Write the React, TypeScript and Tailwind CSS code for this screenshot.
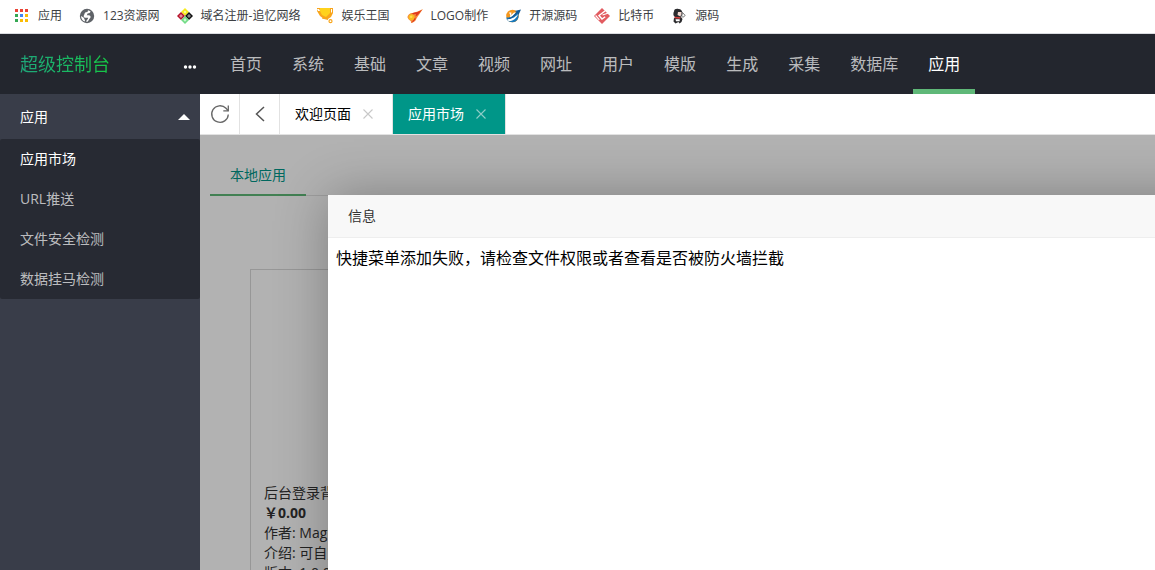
import { useState } from 'react'
import type { ReactNode } from 'react'

const AppsIcon = () => (
  <svg viewBox="0 0 16 16" className="size-4">
    <path fill="#ea4335" d="M1 1h3v3H1zM6 1h3v3H6zM11 1h3v3h-3z" />
    <path fill="#34a853" d="M1 6h3v3H1zM1 11h3v3H1z" />
    <path fill="#4285f4" d="M6 6h3v3H6z" />
    <path fill="#fbbc05" d="M11 6h3v3h-3zM6 11h3v3H6zM11 11h3v3h-3z" />
  </svg>
)

const GlobeIcon = () => (
  <svg viewBox="0 0 16 16" className="size-4">
    <circle cx="8" cy="8" r="7.200" fill="#5f6368" />
    <path fill="#fff" d="M9 2.200l2.500 1C11.500 5 10 5.200 8.500 5.500 8 6 8.500 7 7.500 7.300H10c1.800.2 2 2 1 3-1.300.8-1 2.500-2.500 3.400l-1.300.1c0-1.500 1.800-2.300 2-4H6C4.500 9.500 4.300 7.500 5.300 6.500 5.500 4.500 7 3.800 8.500 4z" />
    <path fill="#fff" d="M2 8l2.500 1.500c1 .8.500 1.800 1.500 2.500l-.2 1.600C3.500 12.800 2 10.500 2 8z" />
  </svg>
)

const DomainIcon = () => (
  <svg viewBox="0 0 16 16" className="size-4">
    <path fill="#f8ec1e" d="M8 0l4 4-4 4-4-4z" />
    <path fill="#b5122b" d="M4 4l4 4-4 4-4-4z" />
    <path fill="#111" d="M12 4l4 4-4 4-4-4z" />
    <path fill="#72dc86" d="M8 8l4 4-4 4-4-4z" />
    <circle cx="4" cy="8" r="1.200" fill="#d8707c" stroke="#f0b8c0" strokeWidth=".7" />
    <circle cx="12" cy="8" r="1.200" fill="#555" stroke="#bbb" strokeWidth=".7" />
    <circle cx="8" cy="12" r="1.400" fill="#c9f5d0" />
    <circle cx="8" cy="4" r="1.200" fill="#fff69a" />
  </svg>
)

const TrophyIcon = () => (
  <svg viewBox="0 0 16 16" className="size-4">
    <path fill="#f8a51b" d="M0 0h16v5l-2 4-3 2H7L3 8 0 3z" />
    <path fill="#ffd21c" d="M3 0h10v5L9 9 5 7 3 3z" />
    <path fill="#fff" d="M0 1h2l1 2H1zM14 1h1v3l-1 1z" />
    <path d="M5 10l6 1.500" stroke="#f8a51b" strokeWidth="1" />
    <circle cx="13.500" cy="13.200" r="1.500" fill="#fff" stroke="#f8a51b" strokeWidth="1.200" />
  </svg>
)

const CometIcon = () => (
  <svg viewBox="0 0 16 16" className="size-4">
    <path fill="#f58a3c" d="M16 1C13 5 11.500 7.500 9.500 10.500 9 13 6.500 14.500 4 15 4.500 12 2 13 .5 9.500.5 7 3 5 5.500 5 9 4 12.500 3 16 1z" />
    <path fill="#e0391f" d="M15 2C12 5 11 7.500 8.500 8.500L9 6 6 6.500 5 5.200C9 4.500 12 3.500 15 2zM8.800 9.500C8.500 12 7 14 4 15c1.500-1.500 2.500-3 2.800-4.500z" />
    <circle cx="4.500" cy="9.200" r="3" fill="#f9b91e" />
    <circle cx="4.200" cy="8.800" r="1.300" fill="#ffdc4a" />
  </svg>
)

const PlanetIcon = () => (
  <svg viewBox="0 0 16 16" className="size-4">
    <circle cx="7.500" cy="8" r="6.300" fill="#f5971d" />
    <path fill="#1878bc" d="M1.300 9.500C5 10 9 8 12.500 4c2.500 4 .5 10-5 10.300C4 14.400 1.700 12.500 1.300 9.500z" />
    <path fill="#fff" d="M4 4.500h2.500L6 7l3-2.500h2L7.500 8.500 5 9.500 5.300 7z" />
    <path fill="#fff" d="M2 11c5 .5 9-2.500 11-5-1 4-5 7.500-9.500 7z" />
    <path fill="#155b96" d="M9.500 3L16 1.500 13.500 7 12.500 5C9 9.500 5 11.500 1 11.500 5 10.500 8.500 7.500 11.500 3.800z" />
  </svg>
)

const CoinIcon = () => (
  <svg viewBox="0 0 16 16" className="size-4">
    <path fill="#e25b60" d="M8 0l8 8-8 8-8-8z" />
    <path d="M11 3L5 7.500l3 3.500 3.200-2.300" fill="none" stroke="#fff" strokeWidth="1.400" />
    <path d="M1.600 7.500l3.800 4.300M8.500 7l6-2" stroke="#fff" strokeWidth="1.200" />
  </svg>
)

const MascotIcon = () => (
  <svg viewBox="0 0 16 16" className="size-4">
    <path fill="#2b2b2e" d="M3 3.500C3 1 5.500.5 7.500 1 10 .5 11.500 3 11.500 5.500c0 2-1 3.500-3 3.500H4C2 8 2 5 3 3.500z" />
    <path fill="#f1d8d0" d="M7 4h3.500v3L9 8.300 6.500 7z" />
    <path fill="#2b2b2e" d="M3 10l7-1 1.500 2-1 3-2 1.500-1-1.500-3 1.500-2-2z" />
    <path fill="#d63a3a" d="M3.500 8.700l6 .5-.5 1.500-5.500-.4z" />
    <path fill="#fff" d="M4.500 11.200h4.200v2H5z" />
    <path fill="#fff" stroke="#555" strokeWidth=".8" d="M11.500 4.500l2.700 3-2.200 1.800-1.300-1z" />
  </svg>
)

const bookmarks: { label: string; icon: ReactNode }[] = [
  { label: '应用', icon: <AppsIcon /> },
  { label: '123资源网', icon: <GlobeIcon /> },
  { label: '域名注册-追忆网络', icon: <DomainIcon /> },
  { label: '娱乐王国', icon: <TrophyIcon /> },
  { label: 'LOGO制作', icon: <CometIcon /> },
  { label: '开源源码', icon: <PlanetIcon /> },
  { label: '比特币', icon: <CoinIcon /> },
  { label: '源码', icon: <MascotIcon /> },
]

const navItems = ['首页', '系统', '基础', '文章', '视频', '网址', '用户', '模版', '生成', '采集', '数据库', '应用']
const sideItems = ['应用市场', 'URL推送', '文件安全检测', '数据挂马检测']
const pageTabs = ['欢迎页面', '应用市场']

export default function App() {
  const [nav, setNav] = useState('应用')
  const [side, setSide] = useState('应用市场')
  const [tab, setTab] = useState('应用市场')

  return (
    <div className="flex h-screen flex-col overflow-hidden bg-white font-['Open_Sans','Noto_Sans_CJK_SC',sans-serif] text-sm text-[#333]">
      <nav className="flex h-[34px] shrink-0 items-center gap-[17px] border-b border-[#dadce0] pb-0.5 pl-[14px]">
        {bookmarks.map(b => (
          <a key={b.label} href="#" className="flex shrink-0 items-center gap-2 text-xs leading-4 text-[#3c4043]">
            {b.icon}
            {b.label}
          </a>
        ))}
      </nav>

      <header className="flex h-[60px] shrink-0 bg-[#23262e]">
        <div className="flex w-[215px] shrink-0 items-center justify-between pr-[18px] pl-5">
          <a href="#" className="bg-linear-to-r from-[#1fa67a] to-[#16c943] bg-clip-text text-lg leading-7 text-transparent">
            超级控制台
          </a>
          <button aria-label="更多" className="mt-1.5">
            <svg viewBox="0 0 14 4" className="h-1 w-3.5" fill="#fff">
              <circle cx="2.500" cy="2" r="1.700" />
              <circle cx="7" cy="2" r="1.700" />
              <circle cx="11.500" cy="2" r="1.700" />
            </svg>
          </button>
        </div>
        {navItems.map(n => (
          <a
            key={n}
            href="#"
            onClick={() => setNav(n)}
            className={`shrink-0 border-b-5 px-[15px] pt-[5px] text-base leading-[50px] ${
              nav === n ? 'border-[#5fb878] text-white' : 'border-transparent text-white/70'
            }`}
          >
            {n}
          </a>
        ))}
      </header>

      <div className="flex min-h-0 flex-1">
        <aside className="w-[200px] shrink-0 bg-[#393d49]">
          <button className="flex h-[45px] w-full items-center justify-between pr-2.5 pl-5 text-white">
            应用
            <svg viewBox="0 0 12 6" className="h-1.5 w-3" fill="#fff">
              <path d="M0 6l6-6 6 6z" />
            </svg>
          </button>
          <ul className="rounded-xs bg-black/30">
            {sideItems.map(s => (
              <li key={s}>
                <a
                  href="#"
                  onClick={() => setSide(s)}
                  className={`block px-5 leading-10 ${side === s ? 'text-white' : 'text-white/70'}`}
                >
                  {s}
                </a>
              </li>
            ))}
          </ul>
        </aside>

        <div className="flex min-w-0 flex-1 flex-col">
          <div className="flex h-[41px] shrink-0 border-b border-[#e2e2e2]">
            <button aria-label="刷新" className="flex w-10 items-center justify-center border-r border-[#e2e2e2]">
              <svg viewBox="0 0 20 20" className="size-5" fill="none" stroke="#666" strokeWidth="1.300">
                <path d="M18.300 10.500a8.300 8.300 0 1 1-2.300-6.200l2.300 2.500" />
                <path d="M18.300 1.500v5.300h-5" />
              </svg>
            </button>
            <button aria-label="后退" className="flex w-10 items-center justify-center border-r border-[#e2e2e2]">
              <svg viewBox="0 0 10 16" className="h-4 w-2.5" fill="none" stroke="#555" strokeWidth="1.500">
                <path d="M9 1L1.500 8 9 15" />
              </svg>
            </button>
            {pageTabs.map(t => (
              <div
                key={t}
                className={`flex items-center gap-2 border-r border-[#e2e2e2] px-[15px] ${
                  tab === t ? 'bg-[#009688] bg-clip-padding text-white' : 'text-black'
                }`}
              >
                <button onClick={() => setTab(t)}>{t}</button>
                <button aria-label={`关闭${t}`} className="flex size-[18px] items-center justify-center">
                  <svg
                    viewBox="0 0 10 10"
                    className="size-2.5"
                    fill="none"
                    stroke={tab === t ? '#8fcdc7' : '#c8c8c8'}
                    strokeWidth="1.100"
                  >
                    <path d="M.5.5l9 9M9.500.5l-9 9" />
                  </svg>
                </button>
              </div>
            ))}
          </div>

          <main className="relative min-h-0 flex-1 overflow-hidden px-2.5 pt-5">
            <div className="flex h-[41px] border-b border-[#e2e2e2]">
              <button className="-mb-px border-b-2 border-[#5fb878] px-5 text-[#009688]">本地应用</button>
            </div>
            <div className="px-10 pt-[73px]">
              <article className="w-60 border border-[#d8d8d8] px-[13px] pb-4">
                <div className="h-[213px]" />
                <div className="leading-5 whitespace-nowrap">
                  <h3>后台登录背景</h3>
                  <p className="font-bold">￥0.00</p>
                  <p>作者: Magic</p>
                  <p>介绍: 可自定义背景</p>
                  <p>版本: 1.0.0</p>
                </div>
              </article>
            </div>

            <div className="absolute inset-0 bg-black/30" />
            <div
              role="dialog"
              aria-labelledby="dialog-title"
              className="absolute top-[60px] -right-32 -bottom-32 left-32 bg-white shadow-[1px_1px_50px_rgba(0,0,0,0.3)]"
            >
              <h2 id="dialog-title" className="border-b border-[#eee] bg-[#f8f8f8] px-5 leading-[42px]">
                信息
              </h2>
              <p className="p-2 text-base leading-6 text-black">快捷菜单添加失败，请检查文件权限或者查看是否被防火墙拦截</p>
            </div>
          </main>
        </div>
      </div>
    </div>
  )
}
